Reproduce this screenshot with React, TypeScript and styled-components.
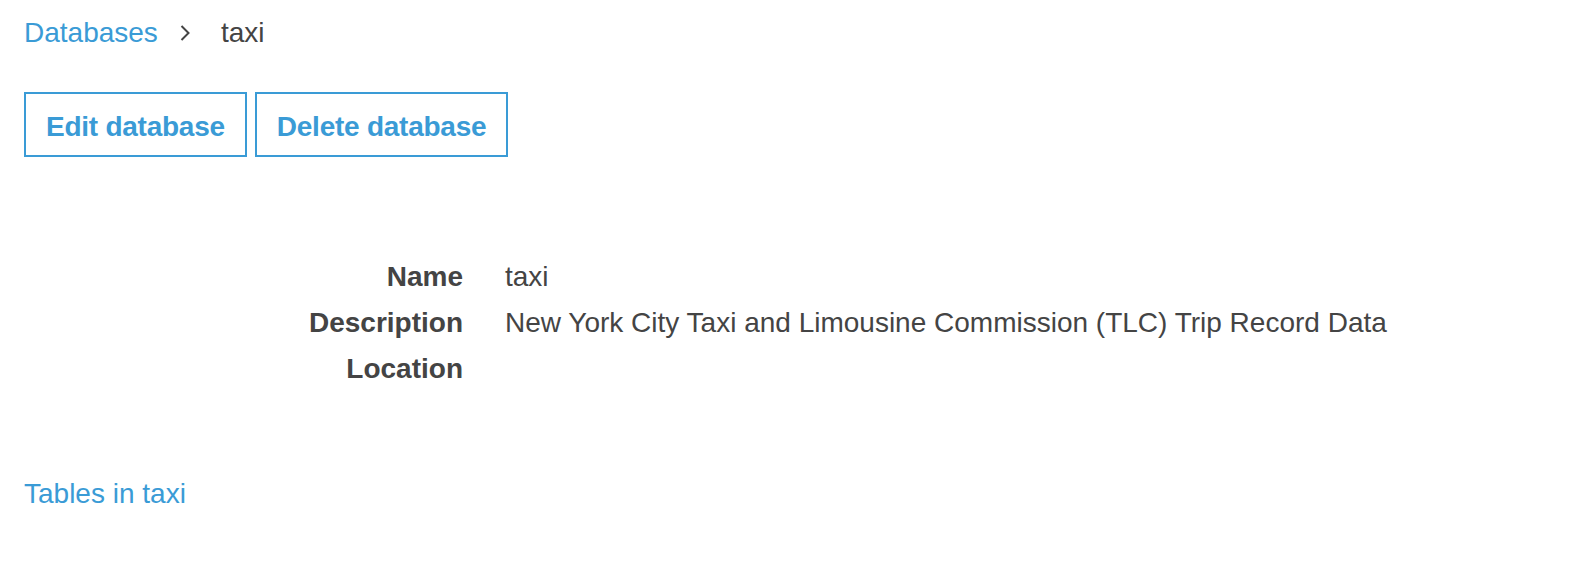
import React from 'react'
import styled, { createGlobalStyle } from 'styled-components'

const GlobalStyle = createGlobalStyle`
  body {
    margin: 0;
    background: #fff;
    font-family: 'Liberation Sans', Arial, sans-serif;
    color: #444;
  }
`

const blue = '#3a9bd6'

const Page = styled.div`
  padding: 13px 24px 0 24px;
`

const Breadcrumb = styled.nav`
  display: flex;
  align-items: center;
  height: 40px;
  font-size: 28px;
  line-height: 40px;
`

const Crumb = styled.a<{ $current?: boolean }>`
  color: ${(p) => (p.$current ? '#444' : blue)};
  text-decoration: none;
  cursor: ${(p) => (p.$current ? 'default' : 'pointer')};
`

const Chevron = styled.svg`
  margin: 0 31px 0 22px;
  width: 10px;
  height: 16px;
`

const Toolbar = styled.div`
  display: flex;
  gap: 8px;
  margin-top: 39px;
`

const OutlineButton = styled.button`
  height: 65px;
  padding: 4px 20px 0 20px;
  border: 2px solid ${blue};
  background: #fff;
  color: ${blue};
  font-family: inherit;
  font-size: 28px;
  font-weight: bold;
  letter-spacing: -0.25px;
  cursor: pointer;
`

const Details = styled.dl`
  display: grid;
  grid-template-columns: 439px 1fr;
  column-gap: 42px;
  margin: 97px 0 0 0;
  font-size: 28px;
  line-height: 46px;
`

const Label = styled.dt`
  text-align: right;
  font-weight: bold;
`

const Value = styled.dd`
  margin: 0;
  min-height: 46px;
`

const SectionLink = styled.a`
  display: block;
  margin-top: 82px;
  font-size: 28px;
  line-height: 40px;
  color: ${blue};
  text-decoration: none;
`

const rows = [
  { label: 'Name', value: 'taxi' },
  {
    label: 'Description',
    value: 'New York City Taxi and Limousine Commission (TLC) Trip Record Data',
  },
  { label: 'Location', value: '' },
]

const App: React.FC = () => {
  return (
    <>
      <GlobalStyle />
      <Page>
        <Breadcrumb>
          <Crumb href="#">Databases</Crumb>
          <Chevron viewBox="0 0 10 16">
            <path d="M1.5 1 L8.5 8 L1.5 15" fill="none" stroke="#444" strokeWidth="2" />
          </Chevron>
          <Crumb $current>taxi</Crumb>
        </Breadcrumb>
        <Toolbar>
          <OutlineButton>Edit database</OutlineButton>
          <OutlineButton>Delete database</OutlineButton>
        </Toolbar>
        <Details>
          {rows.map((r) => (
            <React.Fragment key={r.label}>
              <Label>{r.label}</Label>
              <Value>{r.value}</Value>
            </React.Fragment>
          ))}
        </Details>
        <SectionLink href="#">Tables in taxi</SectionLink>
      </Page>
    </>
  )
}

export default App
